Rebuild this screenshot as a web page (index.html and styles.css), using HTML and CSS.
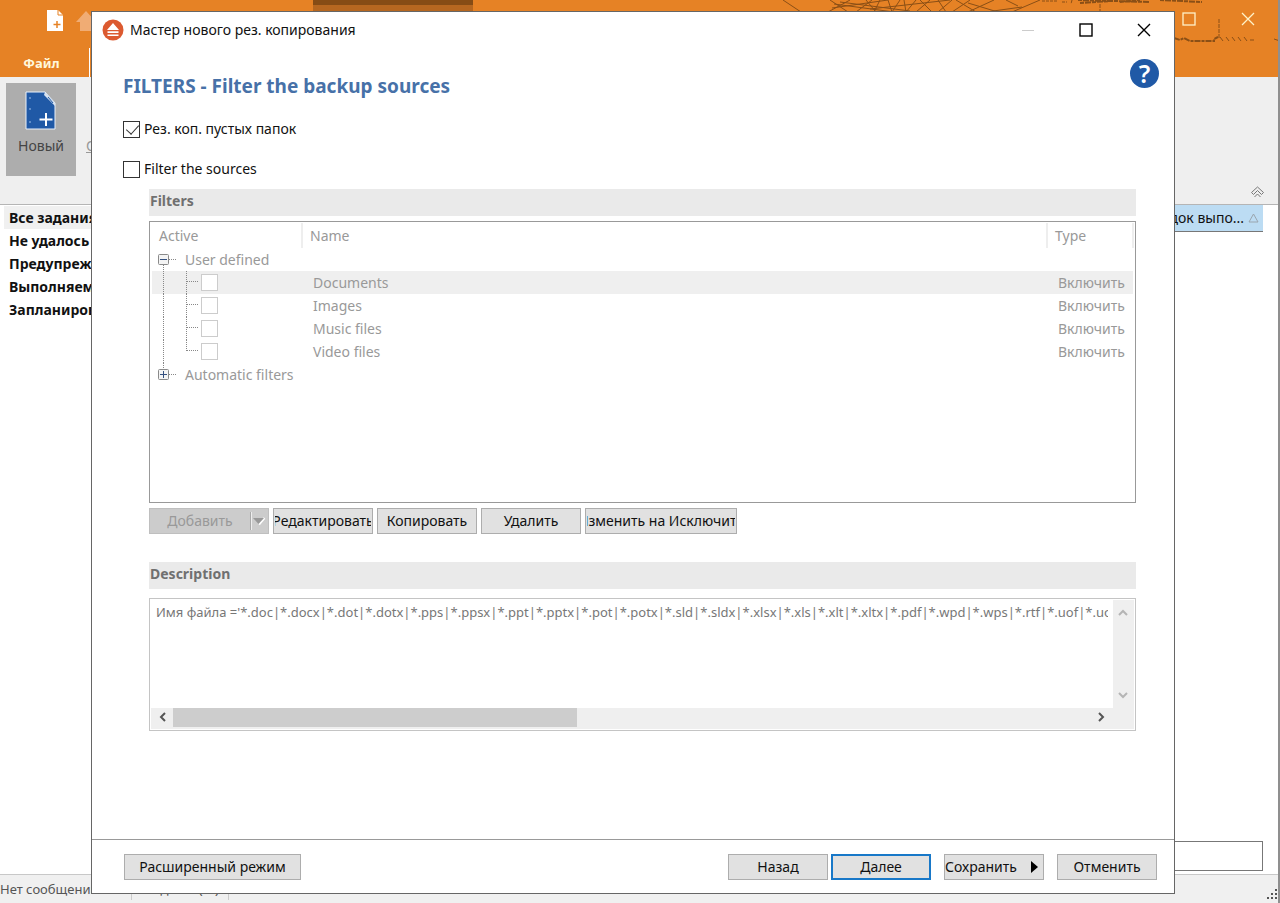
FILE: index.html
```html
<!DOCTYPE html>
<html lang="ru">
<head>
<meta charset="utf-8">
<title>Мастер нового рез. копирования</title>
<link rel="stylesheet" href="styles.css">
</head>
<body>
<div class="app">
  <header class="app-top">
    <svg class="app-art" width="500" height="77" viewBox="0 0 500 77" aria-hidden="true">
      <g fill="none" stroke="#8a4f16" stroke-width="1">
        <path d="M3 0l18 12M48 12l22-12M50 0l18 12M54 4l60 8M52 8l56-8M76 12L92 0M86 0l10 12M100 0l-6 12M108 0l4 12M120 0l-8 12M124 0l2 12M136 0l-10 12M140 0l12 12M150 0l-14 12M60 2l70 9M90 9l80-9M158 0l8 12M172 0l-14 12M176 0l20 12M190 0l-18 12M188 3l30 9M214 0l-26 12M226 0l12 6M260 0l-28 12M206 12l36-5"/>
        <path d="M262 1h16M282 2h5M292 0l-1 4" stroke-dasharray="3 1"/>
        <path d="M298 0l72 2M380 0l42 2M300 3l30-2M340 2l20-2" stroke-width="2" stroke-dasharray="4 1 6 1"/>
        <path d="M320 4v8M439 19v20" stroke-dasharray="4 1"/>
        <path d="M394 38l6 2 4-2 6 3h24v-2l4-2" stroke-width="2" stroke-dasharray="6 1 3 1"/>
        <path d="M440 37l3 4M446 37l3 4M452 37l3 4M458 37l3 4M464 37l3 4M470 40h4M494 39l6 2"/>
      </g>
    </svg>
    <div class="quick">
      <svg width="60" height="24" viewBox="0 0 60 24" aria-hidden="true">
        <path d="M7 1h11l5 5v16H7z" fill="#fff"/><path d="M18 1v5h5" fill="none" stroke="#e68225"/>
        <path d="M17 12v7M13.500 15.500h7" stroke="#e68225" stroke-width="1.5"/>
        <path d="M46 2l10 11h-5v9H40v-9h-4z" fill="#f0ac74"/>
      </svg>
    </div>
    <div class="app-tab-mark"></div>
    <button class="file-tab">Файл</button>
    <div class="app-controls">
      <button aria-label="Развернуть"><svg width="16" height="16"><rect x="2" y="2" width="12" height="12" fill="none" stroke="#fff2c9" stroke-width="1.3"/></svg></button>
      <button aria-label="Закрыть"><svg width="16" height="16"><path d="M2 2l12 12M14 2L2 14" stroke="#fff2c9" stroke-width="1.3"/></svg></button>
    </div>
  </header>
  <section class="ribbon">
    <button class="ribbon-new">
      <svg width="32" height="40" viewBox="0 0 32 40" aria-hidden="true">
        <path d="M1 1h19l10 11v26H1z" fill="#2059a6" stroke="#e9f1fb"/>
        <path d="M20 1l10 11v3L19 4z" fill="#d7e3f2"/><path d="M23 6l5 6" stroke="#2059a6"/>
        <path d="M21 22v13M14.500 28.500h13" stroke="#fff" stroke-width="2"/>
        <path d="M4 7h2M4 18h2M4 31h2" stroke="#9fc1e8"/>
      </svg>
      <span>Новый</span>
    </button>
    <span class="ribbon-off">Открыть</span>
    <svg class="ribbon-fold" width="15" height="12" viewBox="0 0 15 12" aria-hidden="true"><path d="M1.500 6.500l6-5.500 6 5.500-2 2-4-4-4 4zM4.500 11L7.500 8l3 3" fill="none" stroke="#777"/></svg>
  </section>
  <main class="work">
    <ul class="groups">
      <li class="current">Все задания</li><li>Не удалось</li><li>Предупреждения</li><li>Выполняемые</li><li>Запланированные</li>
    </ul>
    <div class="jobs">
      <div class="jobs-head">Порядок выпо...<svg width="11" height="10"><path d="M5.500 1L10 9H1z" fill="none" stroke="#9aa5ae"/></svg></div>
      <input class="jobs-search" aria-label="Поиск">
    </div>
  </main>
  <footer class="status">
    <span class="messages">Нет сообщений</span><span class="count">0 задание(-й)</span>
    <svg class="grip" width="12" height="12"><path d="M9 1h2M9 5h2M5 5h2M9 9h2M5 9h2M1 9h2" stroke="#555" stroke-width="2"/></svg>
  </footer>

  <div class="dialog" role="dialog" aria-labelledby="dlg">
    <div class="titlebar">
      <svg width="22" height="22" viewBox="0 0 22 22" aria-hidden="true"><circle cx="11" cy="11" r="10.500" fill="#dc5a30"/><path d="M11 4l6 7H5zM5.500 12.300h11v1.700h-11zM5.500 15.400h11V17h-11z" fill="#fff"/></svg>
      <span id="dlg" class="title">Мастер нового рез. копирования</span>
      <button aria-label="Свернуть"><svg width="16" height="16"><path d="M2 8.500h12" stroke="#ccc"/></svg></button>
      <button aria-label="Развернуть"><svg width="16" height="16"><rect x="2" y="2" width="12" height="12" fill="none" stroke="#000" stroke-width="1.400"/></svg></button>
      <button aria-label="Закрыть"><svg width="16" height="16"><path d="M2 2l12 12M14 2L2 14" stroke="#000" stroke-width="1.400"/></svg></button>
    </div>
    <div class="page-head">
      <h1>FILTERS - Filter the backup sources</h1>
      <button class="help" aria-label="Справка">?</button>
    </div>
    <div class="content">
      <label class="option"><input type="checkbox" checked>Рез. коп. пустых папок</label>
      <label class="option"><input type="checkbox">Filter the sources</label>
      <div class="details">
        <h2>Filters</h2>
        <div class="list">
          <table>
            <colgroup><col class="c-active"><col><col class="c-type"></colgroup>
            <thead><tr><th>Active</th><th>Name</th><th>Type</th></tr></thead>
            <tbody>
              <tr><td colspan="3"><div class="node"><svg width="30" height="23"><path d="M11.500 17v6M17 11.500h7" class="dots"/><rect x="6.500" y="6.500" width="10" height="10" rx="1" class="box"/><path d="M8 11.500h7" class="sign"/></svg><span class="group">User defined</span></div></td></tr>
              <tr class="sel"><td><div class="node"><svg width="48" height="23"><path d="M11.500 0v23M34.500 0v23M35 10.500h12" class="dots"/></svg><input type="checkbox" disabled aria-label="Documents"></div></td><td>Documents</td><td>Включить</td></tr>
              <tr><td><div class="node"><svg width="48" height="23"><path d="M11.500 0v23M34.500 0v23M35 10.500h12" class="dots"/></svg><input type="checkbox" disabled aria-label="Images"></div></td><td>Images</td><td>Включить</td></tr>
              <tr><td><div class="node"><svg width="48" height="23"><path d="M11.500 0v23M34.500 0v23M35 10.500h12" class="dots"/></svg><input type="checkbox" disabled aria-label="Music files"></div></td><td>Music files</td><td>Включить</td></tr>
              <tr><td><div class="node"><svg width="48" height="23"><path d="M11.500 0v23M34.500 0v11M35 10.500h12" class="dots"/></svg><input type="checkbox" disabled aria-label="Video files"></div></td><td>Video files</td><td>Включить</td></tr>
              <tr><td colspan="3"><div class="node"><svg width="30" height="23"><path d="M11.500 0v6M17 11.500h7" class="dots"/><rect x="6.500" y="6.500" width="10" height="10" rx="1" class="box"/><path d="M8 11.500h7M11.500 8v7" class="sign"/></svg><span class="group">Automatic filters</span></div></td></tr>
            </tbody>
          </table>
        </div>
        <div class="actions">
          <button class="btn split" disabled><span class="clip">Добавить</span><svg width="18" height="20"><path d="M.5 1v18" stroke="#aaa"/><path d="M1.500 1v18" stroke="#eee"/><path d="M14.500 7L9 13.500" stroke="#fff" stroke-width="2"/><path d="M3 7h11l-5.500 6z" fill="#999"/></svg></button>
          <button class="btn"><span class="clip">Редактировать</span></button>
          <button class="btn"><span class="clip">Копировать</span></button>
          <button class="btn">Удалить</button>
          <button class="btn wide"><span class="clip">Изменить на Исключить</span></button>
        </div>
        <h2>Description</h2>
        <div class="desc">
          <textarea readonly wrap="off" aria-label="Description">Имя файла ='*.doc|*.docx|*.dot|*.dotx|*.pps|*.ppsx|*.ppt|*.pptx|*.pot|*.potx|*.sld|*.sldx|*.xlsx|*.xls|*.xlt|*.xltx|*.pdf|*.wpd|*.wps|*.rtf|*.uof|*.uot|*.odt</textarea>
          <div class="vbar"><svg width="12" height="9"><path d="M2 7l4-4 4 4" fill="none" stroke="#b5b5b5" stroke-width="2"/></svg><svg width="12" height="9"><path d="M2 2l4 4 4-4" fill="none" stroke="#b5b5b5" stroke-width="2"/></svg></div>
          <div class="hbar"><svg width="9" height="12"><path d="M7 2L3 6l4 4" fill="none" stroke="#555" stroke-width="2"/></svg><div class="track"><div class="thumb"></div></div><svg width="9" height="12"><path d="M2 2l4 4-4 4" fill="none" stroke="#555" stroke-width="2"/></svg></div>
        </div>
      </div>
    </div>
    <div class="dialog-foot">
      <button class="btn mode">Расширенный режим</button>
      <button class="btn">Назад</button>
      <button class="btn primary">Далее</button>
      <button class="btn save">Сохранить<svg width="8" height="14"><path d="M0 1l7 6-7 6z"/></svg></button>
      <button class="btn">Отменить</button>
    </div>
  </div>
</div>
</body>
</html>
```
FILE: styles.css
```css
* { box-sizing: border-box; }
body { margin: 0; font: 14px/20px "Noto Sans", "Open Sans", sans-serif; color: #111; }
button, input, textarea { font: inherit; color: inherit; }
button { border: 0; background: none; padding: 0; white-space: nowrap; }
svg { display: block; flex: none; }

.app { position: relative; min-height: 100vh; display: flex; flex-direction: column; overflow: hidden; background: #fff; border-right: 2px solid #8f8f8f; }
.app-top { position: relative; height: 77px; display: flex; flex-direction: column; background: #e68225; }
.app-art { position: absolute; top: 0; right: -2px; }
.app-tab-mark { position: absolute; left: 313px; top: 0; width: 160px; height: 12px; background: #b66720; border-top: 5px solid #864c15; }
.quick { height: 48px; padding: 9px 0 0 40px; }
.file-tab { width: 90px; height: 29px; padding-right: 6px; color: #fff8dc; font-weight: 700; font-size: 13px; border-right: 1px solid #fff; }
.app-controls { position: absolute; top: 11px; right: 22px; display: flex; gap: 43px; }

.ribbon { height: 128px; display: flex; align-items: flex-start; padding: 6px 13px 6px 6px; background: #efefef; border-bottom: 1px solid #b5b5b5; }
.ribbon-new { width: 70px; height: 93px; padding-top: 8px; display: flex; flex-direction: column; align-items: center; gap: 5px; background: #adadad; color: #444; }
.ribbon-off { padding: 53px 0 0 10px; color: #999; text-decoration: underline; }
.ribbon-fold { margin-left: auto; align-self: flex-end; }

.work { flex: 1; display: flex; justify-content: space-between; }
.groups { list-style: none; margin: 0; padding: 1px 0 0 4px; width: 200px; font-weight: 700; line-height: 23px; }
.groups li { padding-left: 5px; }
.groups .current { background: #f0f0f0; }
.jobs { width: 250px; padding: 0 15px 3px 0; display: flex; flex-direction: column; justify-content: space-between; }
.jobs-head { height: 27px; padding-right: 4px; display: flex; align-items: center; justify-content: flex-end; gap: 4px; background: #bcdcf3; border-bottom: 1px solid #777; }
.jobs-search { height: 30px; width: 100%; border: 1px solid #777; }
.status { height: 29px; display: flex; padding: 4px 0 0; background: #f0f0f0; border-top: 1px solid #c8c8c8; color: #555; font-size: 13px; }
.status span { border-right: 1px solid #ccc; height: 21px; white-space: nowrap; }
.status .messages { width: 132px; }
.status .count { width: 97px; padding-left: 4px; }
.status .grip { margin: 10px 0 0 auto; }

.dialog { position: absolute; inset: 11px 103px 9px 91px; display: flex; flex-direction: column; background: #fff; border: 1px solid #666; }
.titlebar { display: flex; align-items: center; height: 36px; padding: 0 22px 0 10px; }
.titlebar .title { flex: 1; padding-left: 6px; }
.titlebar button { margin-left: 42px; }
.page-head { display: flex; justify-content: space-between; align-items: flex-start; height: 61px; padding: 11px 15px 0 31px; }
h1 { margin: 0; padding-top: 15px; font-size: 19px; line-height: 24px; color: #4771a8; }
.help { width: 29px; height: 29px; border-radius: 50%; background: #2059a6; color: #fff; font-weight: 600; font-size: 25px; line-height: 29px; }
.content { flex: 1; padding: 0 38px 0 31px; }
.option { display: flex; align-items: center; gap: 4px; height: 40px; }
input[type="checkbox"] { appearance: none; width: 17px; height: 17px; margin: 0; flex: none; border: 1px solid #333; background: #fff; }
input[type="checkbox"]:checked { position: relative; }
input[type="checkbox"]:checked::after { content: ""; position: absolute; left: 5px; top: 0; width: 6px; height: 11px; border: solid #333; border-width: 0 1px 1px 0; transform: rotate(42deg); }
.details { padding-left: 26px; color: #999; }
h2 { margin: 0; height: 27px; padding-left: 1px; background: #eaeaea; color: #707070; font-size: 14px; line-height: 23px; }
.list { margin-top: 5px; height: 282px; border: 1px solid #999; padding: 1px 1px 0 2px; }
table { width: 100%; border-collapse: collapse; table-layout: fixed; }
.c-active { width: 150px; }
.c-type { width: 86px; }
th { height: 25px; padding: 1px 7px 0; text-align: left; font-weight: 400; border-right: 2px solid #eee; }
td { height: 23px; padding: 0 0 0 11px; line-height: 22px; white-space: nowrap; }
td:first-child { padding: 0; }
.sel { background: #efefef; }
.node { display: flex; align-items: center; gap: 1px; height: 23px; }
.node input[type="checkbox"] { border-color: #ccc; }
.group { padding-left: 2px; }
.dots { stroke: #888; stroke-dasharray: 1 1; fill: none; }
.box { fill: #f4f4f4; stroke: #8a8a8a; }
.sign { stroke: #34507f; }

.actions { display: flex; gap: 4px; margin: 5px 0 28px; }
.btn { display: flex; align-items: center; justify-content: center; width: 100px; height: 26px; background: #e1e1e1; border: 1px solid #adadad; color: #111; }
.clip { flex: 1; min-width: 0; height: 100%; margin: 0 1px; display: flex; align-items: center; justify-content: center; overflow: hidden; }
.split { width: 120px; background: #ccc; border-color: #bfbfbf; color: #999; }
.wide { width: 152px; }
.desc { margin-top: 9px; height: 133px; border: 1px solid #c4c4c4; padding: 1px; display: grid; grid-template: 1fr 21px / 1fr 21px; }
.desc textarea { width: 100%; height: 100%; border: 0; outline: 0; resize: none; overflow: hidden; padding: 2px 0 0; border-left: 5px solid #fff; border-right: 5px solid #fff; color: #777; font-size: 13px; }
.vbar { background: #efefef; display: flex; flex-direction: column; justify-content: space-between; align-items: center; padding: 8px 2px 8px 0; }
.hbar { grid-column: 1 / 3; background: #efefef; display: flex; align-items: flex-start; padding: 0 28px 0 7px; gap: 6px; }
.hbar svg { margin-top: 3px; }
.track { flex: 1; height: 19px; }
.thumb { width: 44%; height: 100%; background: #cdcdcd; }

.dialog-foot { height: 54px; display: flex; padding: 14px 17px 0 32px; gap: 13px; border-top: 1px solid #999; }
.mode { width: 177px; margin-right: auto; }
.primary { margin-left: -10px; border: 2px solid #1878c8; }
.save { justify-content: space-between; padding-right: 4px; }
```
